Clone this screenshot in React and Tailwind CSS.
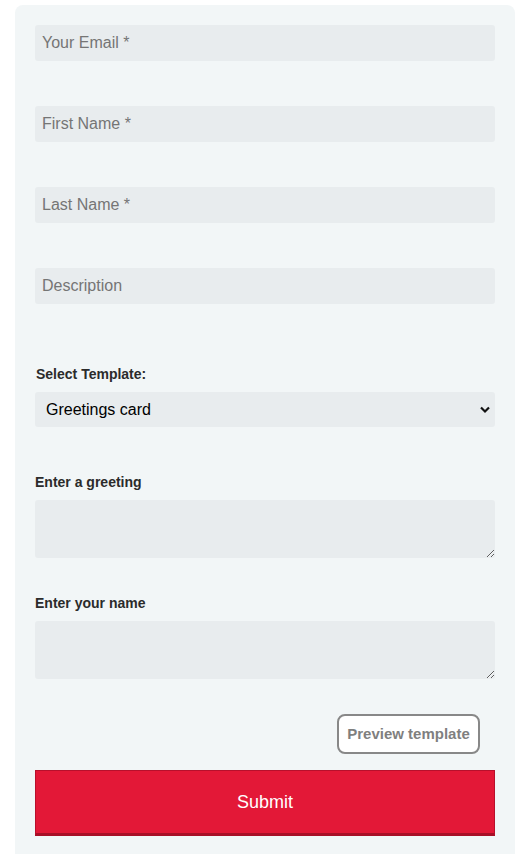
import React from "react";

export default function App() {
  const inputCls =
    "block w-full h-9 rounded-[3px] bg-[#e8ecee] pl-[7px] text-[16px] text-[#333] placeholder:text-[#757575] outline-none border-0";
  const labelCls = "block text-[14px] leading-[16px] font-bold text-[#2b2b2b]";
  return (
    <div className="min-h-[854px] bg-white font-['Liberation_Sans',Arial,sans-serif]">
      <div className="ml-[15px] pt-[5px] w-[500px]">
        <div className="rounded-t-lg bg-[#f2f6f7] px-5 pt-5 pb-[18px] min-h-[849px]">
          <input className={inputCls} placeholder="Your Email *" />
          <input className={`${inputCls} mt-[45px]`} placeholder="First Name *" />
          <input className={`${inputCls} mt-[45px]`} placeholder="Last Name *" />
          <input className={`${inputCls} mt-[45px]`} placeholder="Description" />

          <label className={`${labelCls} mt-[62px] ml-px`}>Select Template:</label>
          <div className="relative mt-[10px]">
            <select className="block w-full h-[35px] appearance-none rounded-[3px] bg-[#e8ecee] pl-[11px] text-[16px] text-black outline-none border-0">
              <option>Greetings card</option>
            </select>
            <svg
              className="pointer-events-none absolute right-[4px] top-[13px]"
              width="12"
              height="9"
              viewBox="0 0 12 9"
            >
              <path d="M2 2.5 L6 6.5 L10 2.5" fill="none" stroke="#111" strokeWidth="2.2" />
            </svg>
          </div>

          <label className={`${labelCls} mt-[47px]`}>Enter a greeting</label>
          <textarea className="mt-[10px] block w-full h-[58px] rounded-[3px] bg-[#e8ecee] outline-none border-0 p-2 text-[16px]" />

          <label className={`${labelCls} mt-[37px]`}>Enter your name</label>
          <textarea className="mt-[10px] block w-full h-[58px] rounded-[3px] bg-[#e8ecee] outline-none border-0 p-2 text-[16px]" />

          <div className="mt-[35px] flex justify-end pr-[15px]">
            <button className="h-10 w-[143px] rounded-lg border-2 border-[#888] bg-white text-[15px] font-bold text-[#7f7f7f]">
              Preview template
            </button>
          </div>

          <button className="mt-4 block w-full h-[66px] border border-[#b8102c] border-b-[3px] border-b-[#a80f27] bg-[#e31837] text-[18px] text-white">
            Submit
          </button>
        </div>
      </div>
    </div>
  );
}
